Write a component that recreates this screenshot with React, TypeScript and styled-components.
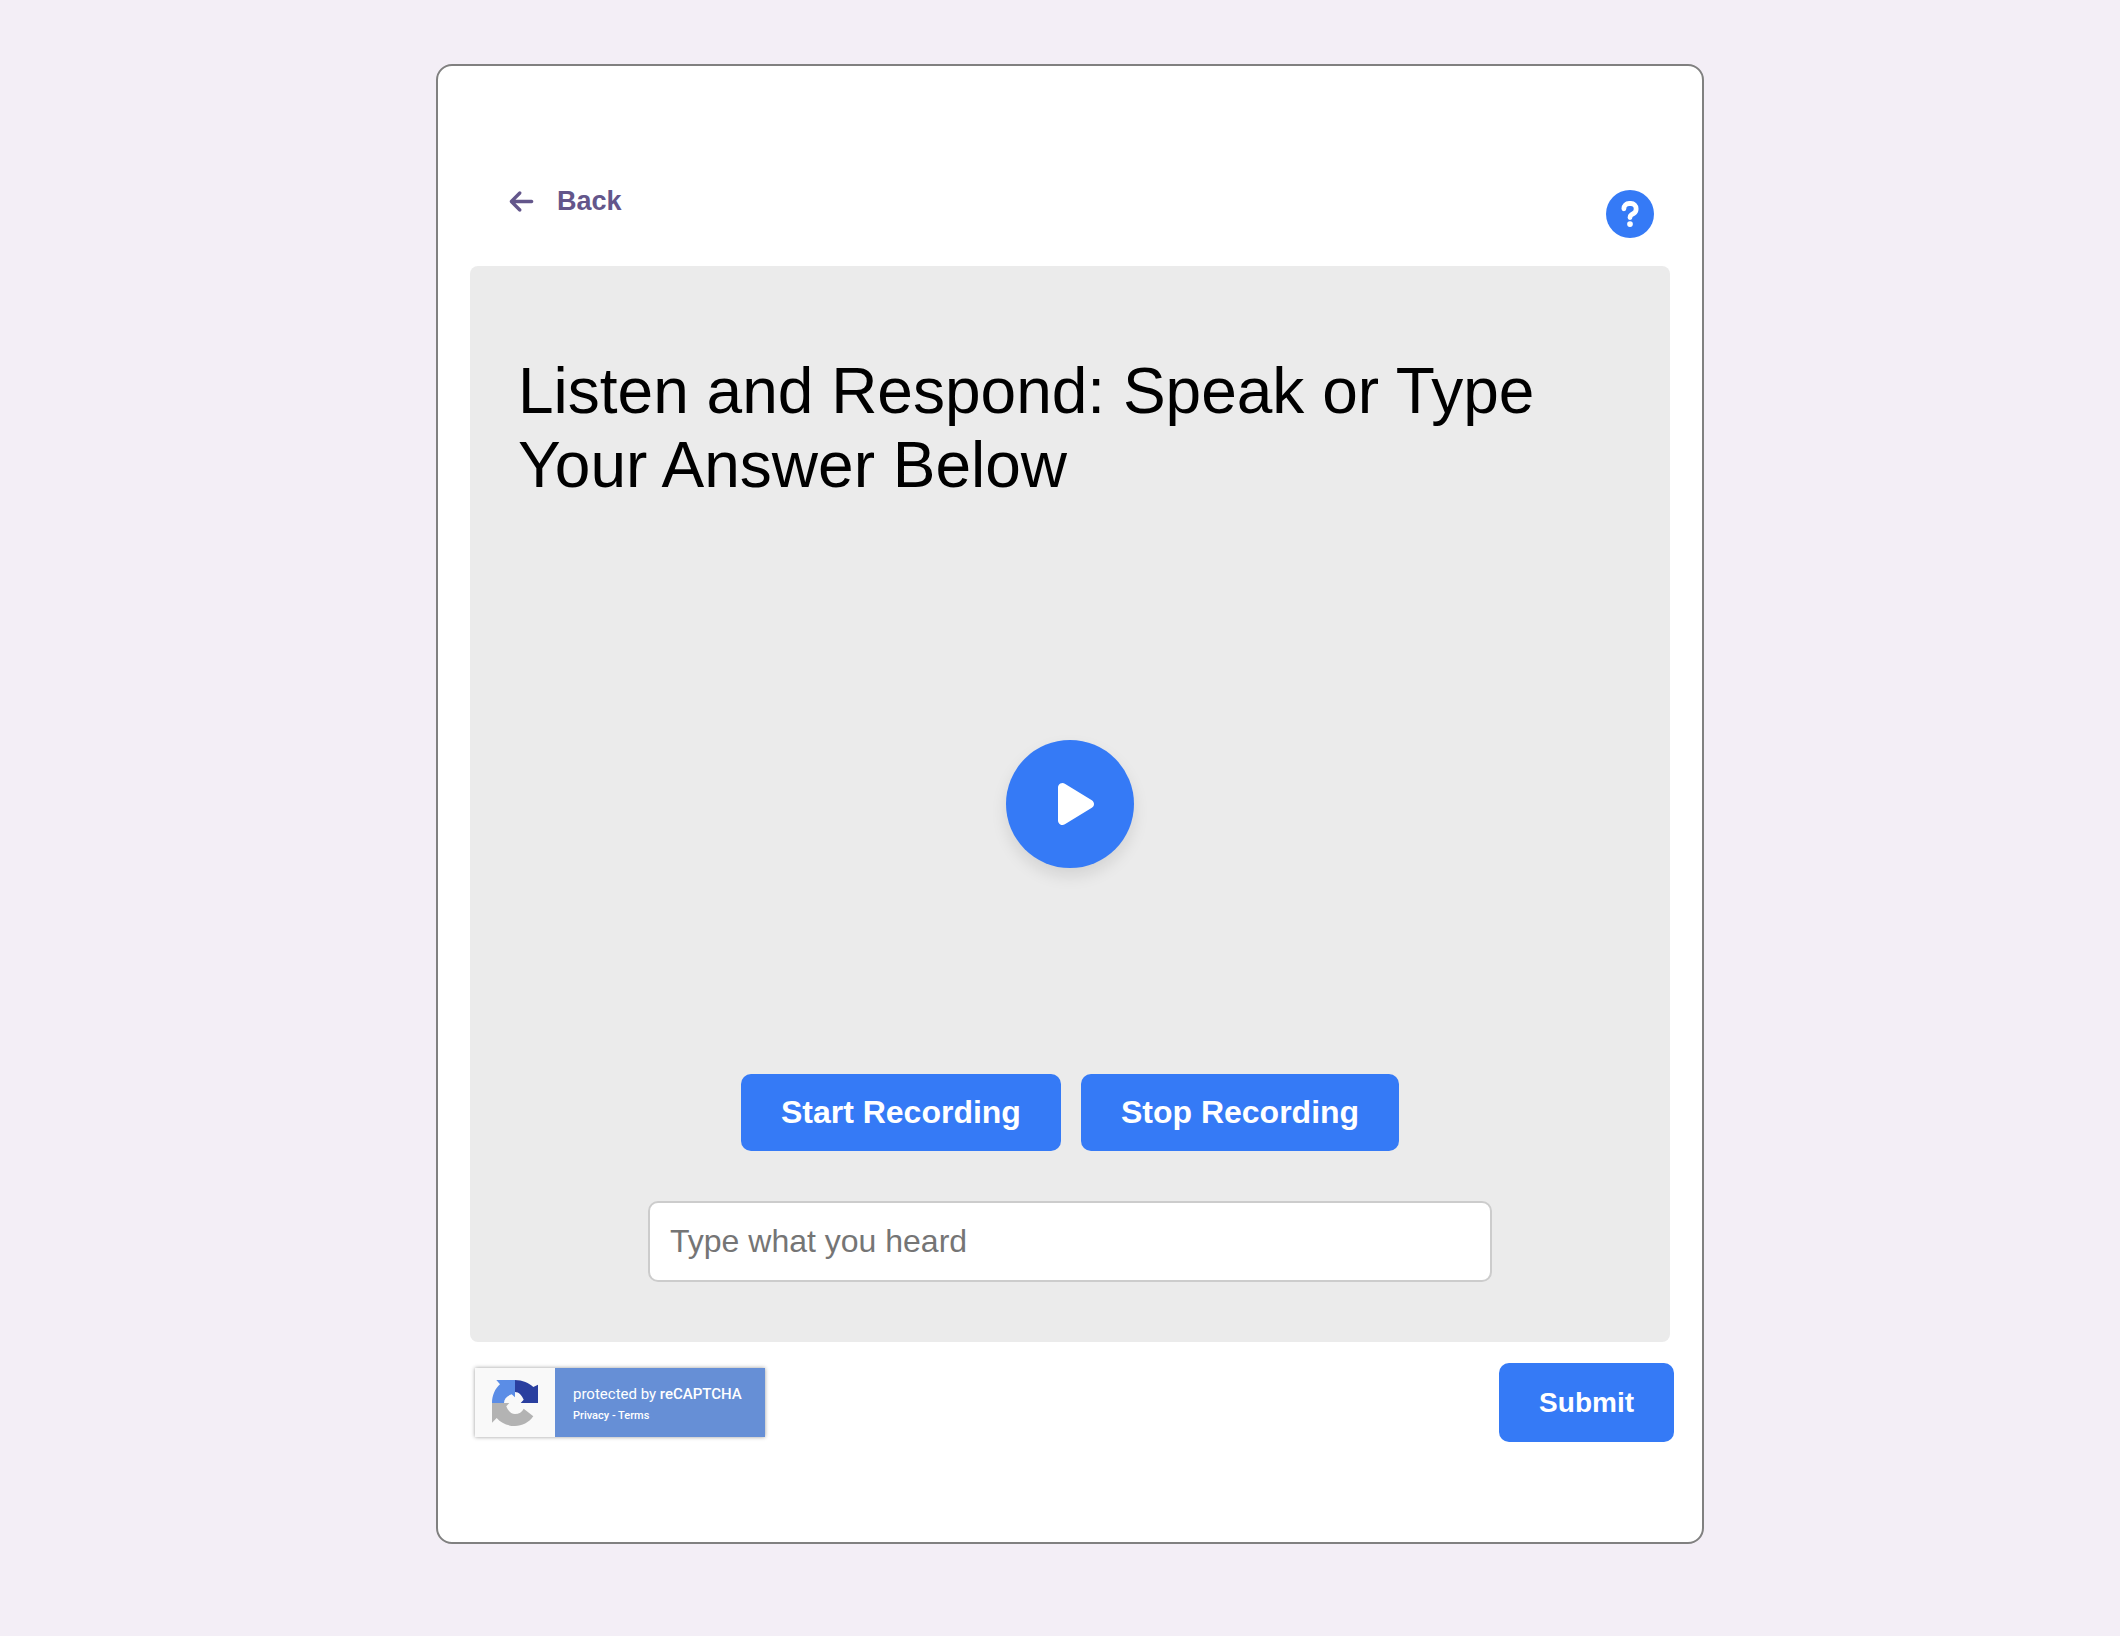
import React, { useState } from "react";
import styled, { createGlobalStyle } from "styled-components";
import { FaArrowLeft, FaPlay, FaQuestion } from "react-icons/fa6";

const BLUE = "#357af6";

const GlobalStyle = createGlobalStyle`
  *, *::before, *::after { box-sizing: border-box; }
  body {
    margin: 0;
    background: #f3eef6;
    font-family: Arial, "Liberation Sans", sans-serif;
  }
  button, input { font-family: inherit; }
`;

const Page = styled.main`
  display: flex;
  justify-content: center;
  align-items: flex-start;
  min-height: 100vh;
  padding: 64px 0 64px 20px;
`;

const Card = styled.section`
  width: 100%;
  max-width: 1268px;
  padding: 119px 32px 100px;
  background: #fff;
  border: 2px solid #808080;
  border-radius: 16px;
`;

const Header = styled.header`
  display: flex;
  justify-content: space-between;
  align-items: flex-end;
  padding: 0 16px 28px 38px;
`;

const BackButton = styled.button`
  display: flex;
  align-items: center;
  gap: 22px;
  padding: 0 0 21px;
  border: 0;
  background: none;
  color: #63568b;
  font-size: 27px;
  font-weight: 700;
  line-height: 32px;
  cursor: pointer;
`;

const RoundButton = styled.button<{ $size: number }>`
  display: flex;
  justify-content: center;
  align-items: center;
  width: ${(p) => p.$size}px;
  height: ${(p) => p.$size}px;
  padding: 0;
  border: 0;
  border-radius: 50%;
  background: ${BLUE};
  color: #fff;
  cursor: pointer;
`;

const HelpIcon = styled(FaQuestion)`
  overflow: visible;
  stroke: currentColor;
  stroke-width: 24px;
`;

const PlayButton = styled(RoundButton)`
  margin: 238px 0 206px;
  padding-left: 12px;
  box-shadow: 0 8px 16px rgba(0, 0, 0, 0.1);
`;

const Panel = styled.div`
  display: flex;
  flex-direction: column;
  align-items: center;
  padding: 88px 48px 60px;
  background: #ebebeb;
  border-radius: 8px;
`;

const Title = styled.h1`
  align-self: stretch;
  margin: 0;
  color: #000;
  font-size: 64px;
  font-weight: 400;
  line-height: 74px;
`;

const Actions = styled.div`
  display: flex;
  flex-wrap: wrap;
  justify-content: center;
  gap: 20px;
  margin-bottom: 50px;
`;

const ActionButton = styled.button<{ $small?: boolean }>`
  padding: ${(p) => (p.$small ? "24px 40px 23px" : "20px 40px")};
  border: 0;
  border-radius: 10px;
  background: ${BLUE};
  color: #fff;
  font-size: ${(p) => (p.$small ? 28 : 32)}px;
  font-weight: 700;
  line-height: ${(p) => (p.$small ? 32 : 37)}px;
  cursor: pointer;
`;

const AnswerInput = styled.input`
  width: 100%;
  max-width: 844px;
  height: 81px;
  padding: 20px;
  border: 2px solid #ccc;
  border-radius: 10px;
  background: #fff;
  color: #000;
  font-size: 32px;
  &::placeholder { color: #757575; opacity: 1; }
`;

const Footer = styled.footer`
  display: flex;
  justify-content: space-between;
  align-items: center;
  margin: 21px -4px 0 5px;
`;

const Badge = styled.aside`
  display: flex;
  width: 290px;
  height: 69px;
  box-shadow: 0 0 4px rgba(0, 0, 0, 0.4);
`;

const BadgeLogo = styled.div`
  display: flex;
  justify-content: center;
  align-items: center;
  width: 80px;
  background: #f9f9f9;
`;

const BadgeText = styled.div`
  display: flex;
  flex: 1;
  flex-direction: column;
  justify-content: center;
  gap: 5px;
  padding: 3px 0 0 18px;
  background: #668fd6;
  color: #fff;
  font-family: Roboto, sans-serif;
  font-size: 15px;
  font-weight: 400;
  line-height: 18px;
  white-space: nowrap;
  strong { font-weight: 500; }
`;

const BadgeLinks = styled.div`
  font-size: 11px;
  font-weight: 500;
  line-height: 16px;
  a { color: inherit; text-decoration: none; }
`;

function CaptchaLogo() {
  return (
    <svg width="48" height="48" viewBox="0 0 48 48" aria-hidden="true">
      <path
        fill="#5b8de6"
        d="M24 1V18.3L20.7 15.3C16 17 13 20 13 24H1C1 16.5 4 9.7 9 5.3L5.3 1Z"
      />
      <path
        fill="#2a3f9f"
        d="M24 1C31.5 1 38 4 42.3 8L47 5.7V24H29.7L32.7 20.7C31 16.5 28 13 24 13Z"
      />
      <path
        fill="#b3b3b3"
        d="M1 24H18.3L15.3 27.3C17 32 20.5 35 24 35C28 35 31 33 32.7 29.7L42.3 37.3C38 43.5 31 47 24 47C16 47 10 44 5.7 39L1 43.7Z"
      />
    </svg>
  );
}

export default function App() {
  const [answer, setAnswer] = useState("");
  return (
    <>
      <GlobalStyle />
      <Page>
        <Card>
          <Header>
            <BackButton type="button">
              <FaArrowLeft aria-hidden="true" />
              Back
            </BackButton>
            <RoundButton type="button" $size={48} aria-label="Help">
              <HelpIcon size={28} />
            </RoundButton>
          </Header>
          <Panel>
            <Title>Listen and Respond: Speak or Type Your Answer Below</Title>
            <PlayButton type="button" $size={128} aria-label="Play">
              <FaPlay size={48} />
            </PlayButton>
            <Actions>
              <ActionButton type="button">Start Recording</ActionButton>
              <ActionButton type="button">Stop Recording</ActionButton>
            </Actions>
            <AnswerInput
              type="text"
              aria-label="Type what you heard"
              placeholder="Type what you heard"
              value={answer}
              onChange={(e) => setAnswer(e.target.value)}
            />
          </Panel>
          <Footer>
            <Badge>
              <BadgeLogo>
                <CaptchaLogo />
              </BadgeLogo>
              <BadgeText>
                <span>
                  protected by <strong>reCAPTCHA</strong>
                </span>
                <BadgeLinks>
                  <a href="#privacy">Privacy</a> - <a href="#terms">Terms</a>
                </BadgeLinks>
              </BadgeText>
            </Badge>
            <ActionButton type="submit" $small>
              Submit
            </ActionButton>
          </Footer>
        </Card>
      </Page>
    </>
  );
}
